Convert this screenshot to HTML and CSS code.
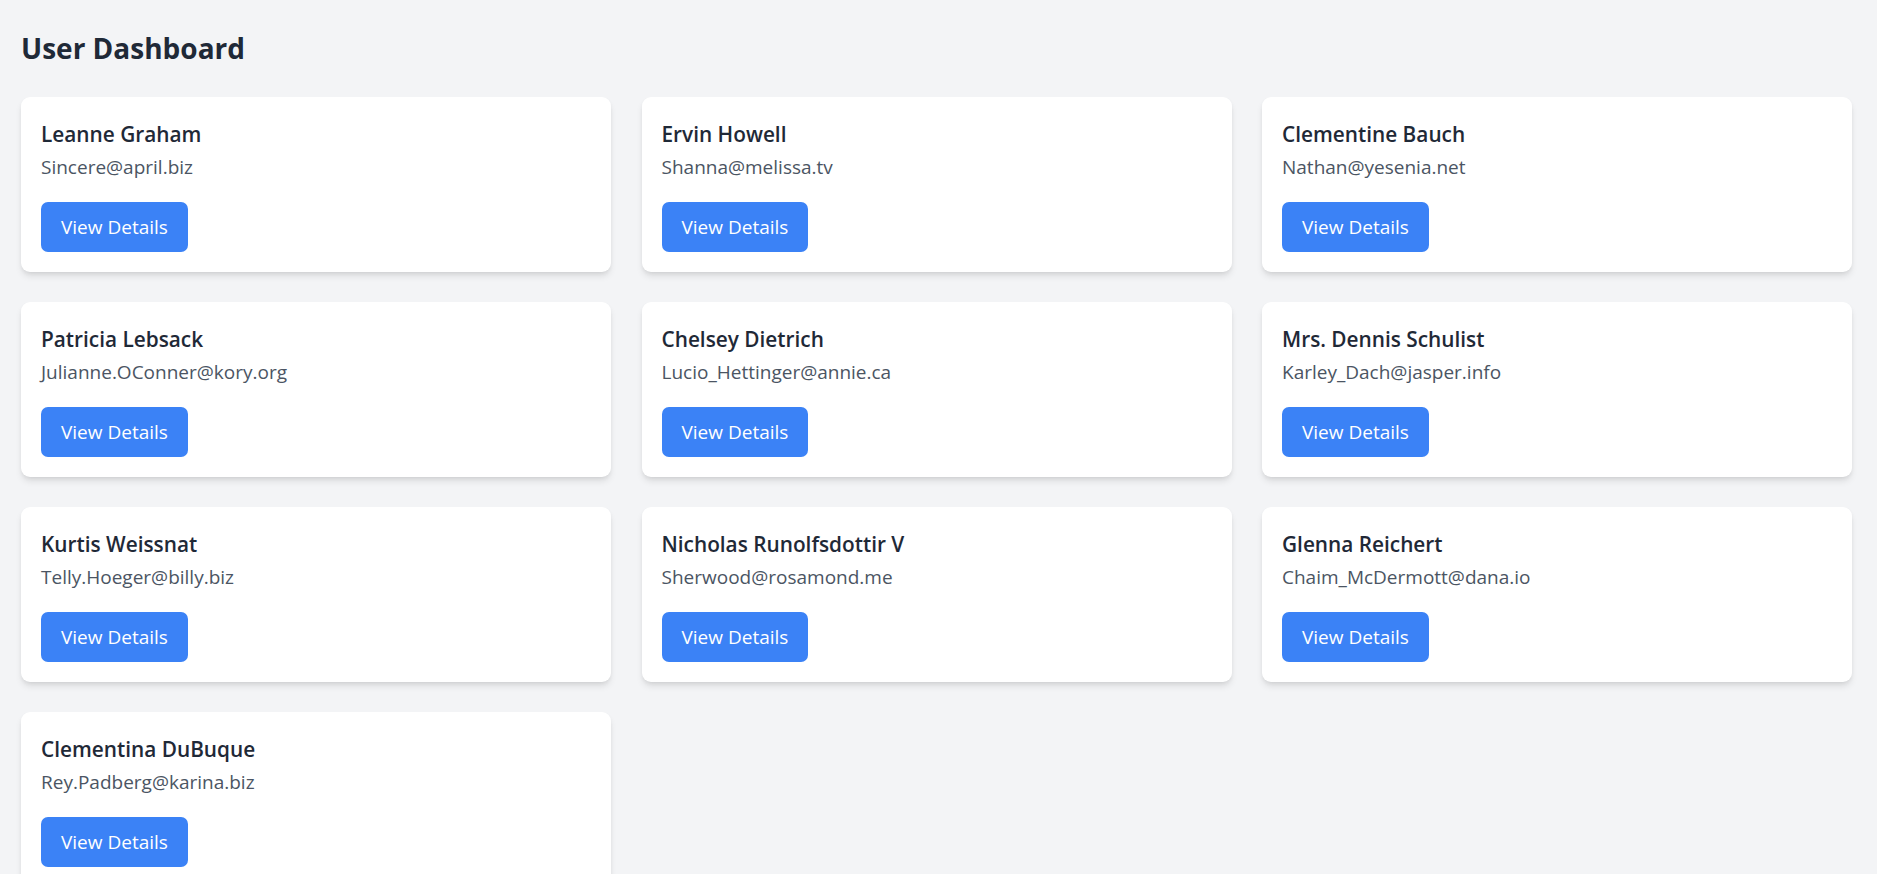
FILE: index.html
```html
<!DOCTYPE html>
<html lang="en">
<head>
<meta charset="utf-8">
<title>User Dashboard</title>
<link rel="stylesheet" href="styles.css">
</head>
<body>
<main class="page">
  <h1 class="title">User Dashboard</h1>
  <div class="grid">
    <div class="card"><h2 class="name">Leanne Graham</h2><p class="email">Sincere@april.biz</p><button class="btn">View Details</button></div>
    <div class="card"><h2 class="name">Ervin Howell</h2><p class="email">Shanna@melissa.tv</p><button class="btn">View Details</button></div>
    <div class="card"><h2 class="name">Clementine Bauch</h2><p class="email">Nathan@yesenia.net</p><button class="btn">View Details</button></div>
    <div class="card"><h2 class="name">Patricia Lebsack</h2><p class="email">Julianne.OConner@kory.org</p><button class="btn">View Details</button></div>
    <div class="card"><h2 class="name">Chelsey Dietrich</h2><p class="email">Lucio_Hettinger@annie.ca</p><button class="btn">View Details</button></div>
    <div class="card"><h2 class="name">Mrs. Dennis Schulist</h2><p class="email">Karley_Dach@jasper.info</p><button class="btn">View Details</button></div>
    <div class="card"><h2 class="name">Kurtis Weissnat</h2><p class="email">Telly.Hoeger@billy.biz</p><button class="btn">View Details</button></div>
    <div class="card"><h2 class="name">Nicholas Runolfsdottir V</h2><p class="email">Sherwood@rosamond.me</p><button class="btn">View Details</button></div>
    <div class="card"><h2 class="name">Glenna Reichert</h2><p class="email">Chaim_McDermott@dana.io</p><button class="btn">View Details</button></div>
    <div class="card"><h2 class="name">Clementina DuBuque</h2><p class="email">Rey.Padberg@karina.biz</p><button class="btn">View Details</button></div>
  </div>
</main>
</body>
</html>
```
FILE: styles.css
```css
* { box-sizing: border-box; }
html, body { margin: 0; padding: 0; }
body {
  background: #f3f4f6;
  font-family: "Open Sans", "Noto Sans", sans-serif;
  color: #1f2937;
}
.page {
  padding: 28px 25px 25px 21px;
}
.title {
  margin: 0 0 29px 0;
  font-size: 28px;
  line-height: 40px;
  font-weight: 700;
  color: #1f2937;
}
.grid {
  display: grid;
  grid-template-columns: repeat(3, 1fr);
  column-gap: 30.5px;
  row-gap: 30px;
}
.card {
  background: #fff;
  border-radius: 9px;
  padding: 20px;
  box-shadow: 0 5px 7px -1px rgba(0,0,0,0.1), 0 2px 5px -2px rgba(0,0,0,0.1);
}
.name {
  margin: 0;
  font-size: 20.8px;
  line-height: 35px;
  font-weight: 600;
  color: #1f2937;
}
.email {
  margin: 0;
  font-size: 19px;
  line-height: 30px;
  color: #4b5563;
}
.btn {
  margin-top: 20px;
  display: inline-block;
  height: 50px;
  padding: 0 20px;
  border: 0;
  border-radius: 7px;
  background: #3b82f6;
  color: #fff;
  font-family: inherit;
  font-size: 19px;
  line-height: 30px;
}
```
